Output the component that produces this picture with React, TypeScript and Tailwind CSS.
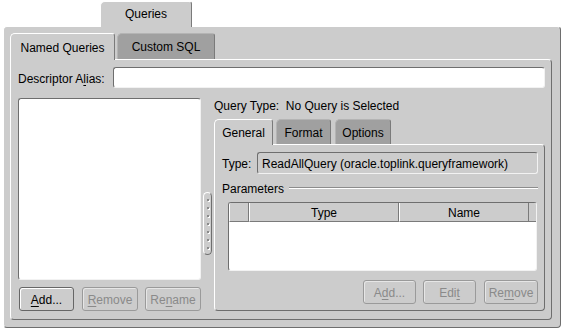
import type { ReactNode } from 'react';

const panel =
  'bg-[#cccccc] border border-t-white border-l-white border-r-[#6e6e6e] border-b-[#6e6e6e]';
const sunken =
  'border border-t-[#6e6e6e] border-l-[#6e6e6e] border-r-[#f2f2f2] border-b-[#f2f2f2]';

function Tab({
  children,
  selected,
  className = '',
}: {
  children: ReactNode;
  selected?: boolean;
  className?: string;
}) {
  if (selected) {
    return (
      <div
        className={`relative z-10 -mb-px flex items-center justify-center bg-[#cccccc] border border-b-0 border-t-white border-l-white border-r-[#7a7a7a] rounded-tl-[5px] rounded-tr-[3px] ${className}`}
      >
        {children}
      </div>
    );
  }
  return (
    <div
      className={`flex items-center justify-center bg-[#a0a0a0] border border-b-0 border-t-[#b4b4b4] border-l-[#b4b4b4] border-r-[#7a7a7a] rounded-tl-[5px] rounded-tr-[3px] ${className}`}
    >
      {children}
    </div>
  );
}

function Button({
  children,
  disabled,
  className = '',
}: {
  children: ReactNode;
  disabled?: boolean;
  className?: string;
}) {
  return (
    <div
      className={`flex h-[24px] items-center justify-center rounded-[3px] border pt-px ${
        disabled
          ? 'border-[#9a9a9a] text-[#8a8a8a] shadow-[inset_1px_1px_0_#e6e6e6]'
          : 'border-[#666666] shadow-[inset_1px_1px_0_#ffffff]'
      } ${className}`}
    >
      {children}
    </div>
  );
}

function U({ children }: { children: ReactNode }) {
  return <span className="underline underline-offset-2">{children}</span>;
}

export default function App() {
  return (
    <div className="w-[564px] h-[331px] overflow-hidden bg-white pl-[3px] pt-[1px] font-['Liberation_Sans',Arial,sans-serif] text-[12px] leading-none text-black">
      <Tab selected className="ml-[97px] w-[92px] h-[26px] pb-[2px]">
        Queries
      </Tab>

      <div className={`${panel} w-[558px] h-[302px] rounded-[4px] pl-[6px] pt-[5px]`}>
        <div className="flex items-end h-[27px]">
          <Tab selected className="w-[105px] h-[27px] pt-px">
            Named Queries
          </Tab>
          <Tab className="ml-[2px] w-[98px] h-[26px] pt-px">Custom SQL</Tab>
        </div>

        <div className={`${panel} w-[542px] h-[261px] rounded-[4px] rounded-tl-none pl-[7px] pt-[7px]`}>
          <div className="flex items-center h-[21px]">
            <div className="w-[95px] pt-[3px]">
              Descriptor A<U>l</U>ias:
            </div>
            <div className={`${sunken} w-[432px] h-[21px] rounded-[3px] bg-white`} />
          </div>

          <div className="flex mt-[10px]">
            <div className="w-[183px]">
              <div className={`${sunken} h-[182px] rounded-[3px] bg-white`} />
              <div className="flex mt-[7px]">
                <Button className="ml-px w-[55px]">
                  <U>A</U>dd...
                </Button>
                <Button disabled className="ml-[8px] w-[56px]">
                  <U>R</U>emove
                </Button>
                <Button disabled className="ml-[7px] w-[56px]">
                  Re<U>n</U>ame
                </Button>
              </div>
            </div>

            <div className="ml-[2px] mt-[94px] flex h-[63px] w-[9px] flex-col items-center justify-center gap-[6px] rounded-full border border-t-white border-l-white border-r-[#6e6e6e] border-b-[#6e6e6e]">
              {[0, 1, 2, 3, 4, 5, 6].map((i) => (
                <span
                  key={i}
                  className="block h-[2px] w-[2px] bg-[#8a8a8a] shadow-[1px_1px_0_#ffffff]"
                />
              ))}
            </div>

            <div className="ml-[2px] w-[331px]">
              <div className="h-[14px] pt-[2px] leading-[12px]">
                Query Type:&nbsp;&nbsp;No Query is Selected
              </div>
              <div className="flex items-end mt-[6px] h-[26px]">
                <Tab selected className="w-[59px] h-[26px] pt-px">
                  General
                </Tab>
                <Tab className="ml-[3px] w-[55px] h-[25px] pt-px">Format</Tab>
                <Tab className="ml-[4px] w-[56px] h-[25px] pt-px">Options</Tab>
              </div>

              <div className={`${panel} h-[167px] rounded-[4px] rounded-tl-none pl-[7px] pt-[7px]`}>
                <div className="flex items-center h-[22px]">
                  <div className="w-[35px] pt-[2px]">Type:</div>
                  <div
                    className={`${sunken} flex h-[22px] w-[281px] items-center rounded-[3px] pl-[4px] pt-[2px]`}
                  >
                    ReadAllQuery (oracle.toplink.queryframework)
                  </div>
                </div>

                <div className="flex items-center mt-[7px] h-[14px] pr-[6px]">
                  <span className="pt-[2px]">Parameters</span>
                  <div className="ml-[5px] flex-1 border-t border-t-[#8c8c8c] border-b border-b-white" />
                </div>

                <div
                  className={`${sunken} ml-[6px] mt-[7px] h-[69px] w-[309px] overflow-hidden rounded-[3px] bg-white`}
                >
                  <div className="flex h-[19px] bg-[#cccccc]">
                    <div className="w-[20px] border-l border-l-white border-r border-r-[#7a7a7a] border-b border-b-[#7a7a7a]" />
                    <div className="flex w-[150px] items-center justify-center border-l border-l-white border-r border-r-[#7a7a7a] border-b border-b-[#7a7a7a] pt-[2px]">
                      Type
                    </div>
                    <div className="flex w-[130px] items-center justify-center border-l border-l-white border-r border-r-[#7a7a7a] border-b border-b-[#7a7a7a] pt-[2px]">
                      Name
                    </div>
                    <div className="flex-1 border-b border-b-[#7a7a7a]" />
                  </div>
                </div>

                <div className="flex justify-end mt-[9px] pr-[6px]">
                  <Button disabled className="w-[53px]">
                    A<U>d</U>d...
                  </Button>
                  <Button disabled className="ml-[7px] w-[53px]">
                    Edi<U>t</U>
                  </Button>
                  <Button disabled className="ml-[8px] w-[54px]">
                    Re<U>m</U>ove
                  </Button>
                </div>
              </div>
            </div>
          </div>
        </div>
      </div>
    </div>
  );
}
